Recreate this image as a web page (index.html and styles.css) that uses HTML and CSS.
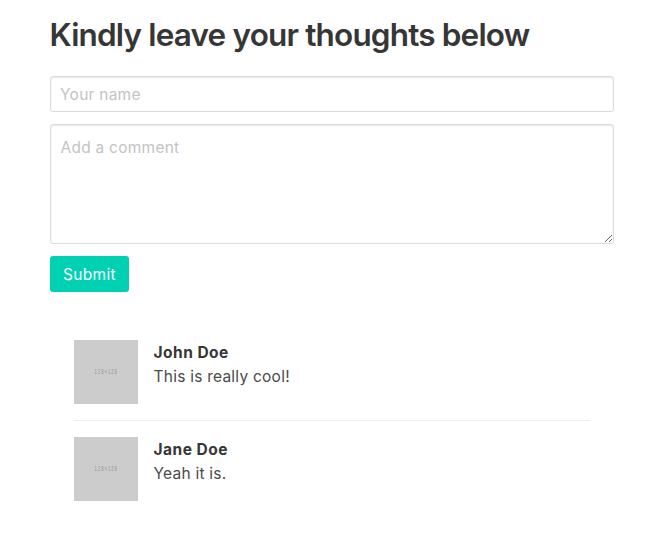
FILE: index.html
```html
<!DOCTYPE html>
<html lang="en">
<head>
<meta charset="utf-8">
<title>Comments</title>
<link rel="stylesheet" href="styles.css">
</head>
<body>
<main class="container">
  <h1 class="title">Kindly leave your thoughts below</h1>
  <form class="form">
    <input class="input" type="text" placeholder="Your name">
    <textarea class="input textarea" placeholder="Add a comment"></textarea>
    <button class="button" type="button">Submit</button>
  </form>
  <section class="comments">
    <article class="media">
      <div class="avatar"><svg width="64" height="64" viewBox="0 0 64 64"><text class="size" transform="translate(20.5 34) scale(.65 1)">128×128</text></svg></div>
      <div class="content"><strong>John Doe</strong><p>This is really cool!</p></div>
    </article>
    <article class="media">
      <div class="avatar"><svg width="64" height="64" viewBox="0 0 64 64"><text class="size" transform="translate(20.5 34) scale(.65 1)">128×128</text></svg></div>
      <div class="content"><strong>Jane Doe</strong><p>Yeah it is.</p></div>
    </article>
  </section>
</main>
</body>
</html>
```
FILE: styles.css
```css
* { box-sizing: border-box; }
body { margin: 0; background: #fff; color: #4a4a4a; font: 15.5px/24px Inter, sans-serif; letter-spacing: 0.21px; }
.container { padding: 17px 50px 0; }
.title { margin: 0 0 23px -0.5px; color: #363636; font-size: 31.5px; line-height: 36px; font-weight: 600; letter-spacing: -0.83px; white-space: nowrap; }
.form { display: flex; flex-direction: column; align-items: flex-start; gap: 12px; }
.input { display: block; width: 100%; height: 36px; margin: 0; padding: 0 9px; border: 1px solid #dbdbdb; border-radius: 3px; box-shadow: inset 0 1px 2px rgba(10,10,10,.1); background: #fff; color: #363636; font: inherit; letter-spacing: 0.25px; }
.input::placeholder { color: #c3c3c3; opacity: 1; }
.textarea { height: 120px; padding: 11px 9.5px 9px; resize: vertical; }
.button { width: 79px; height: 36px; padding: 2px 0 0; border: 0; border-radius: 3px; background: #00d1b2; color: #fff; font: inherit; letter-spacing: 0.3px; }
.comments { padding: 48px 24px 0; }
.media { display: flex; gap: 16px; }
.media + .media { margin-top: 16px; padding-top: 16px; border-top: 1px solid #ededed; }
.avatar { width: 64px; height: 64px; background: #ccc; }
.avatar svg { display: block; }
.size { fill: #929292; font: 6.5px "Liberation Sans", sans-serif; letter-spacing: 1.5px; }
.content { margin-left: -0.5px; padding-top: 1px; }
.content strong { display: block; color: #363636; font-weight: 700; letter-spacing: 0.48px; }
.content p { margin: 0; letter-spacing: 0.24px; }
```
